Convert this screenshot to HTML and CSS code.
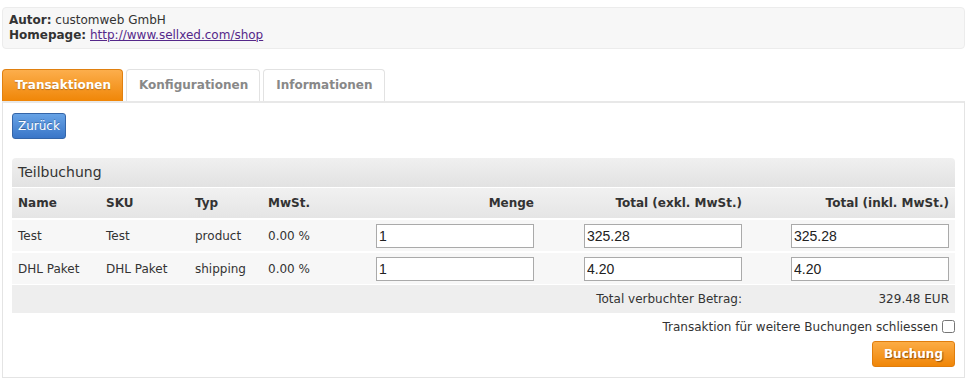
FILE: index.html
```html
<!DOCTYPE html>
<html lang="de">
<head>
    <meta charset="UTF-8">
    <title>Transaktion</title>
    <link rel="stylesheet" href="styles.css">
</head>
<body>
    <div class="info">
        <div><b>Autor:</b> customweb GmbH</div>
        <div><b>Homepage:</b> <a href="#">http://www.sellxed.com/shop</a></div>
    </div>

    <ul class="tabs">
        <li class="tab active">Transaktionen</li>
        <li class="tab">Konfigurationen</li>
        <li class="tab">Informationen</li>
    </ul>

    <div class="panel">
        <button class="btn btn-blue">Zurück</button>

        <div class="box">
            <div class="box-title">Teilbuchung</div>
            <table class="items">
                <colgroup>
                    <col style="width: 88px">
                    <col style="width: 89px">
                    <col style="width: 73px">
                    <col style="width: 108px">
                    <col style="width: 170px">
                    <col style="width: 208px">
                    <col>
                </colgroup>
                <thead>
                    <tr>
                        <th>Name</th>
                        <th>SKU</th>
                        <th>Typ</th>
                        <th>MwSt.</th>
                        <th class="right">Menge</th>
                        <th class="right">Total (exkl. MwSt.)</th>
                        <th class="right">Total (inkl. MwSt.)</th>
                    </tr>
                </thead>
                <tbody>
                    <tr>
                        <td>Test</td>
                        <td>Test</td>
                        <td>product</td>
                        <td>0.00 %</td>
                        <td class="right"><input type="text" value="1"></td>
                        <td class="right"><input type="text" value="325.28"></td>
                        <td class="right"><input type="text" value="325.28"></td>
                    </tr>
                    <tr>
                        <td>DHL Paket</td>
                        <td>DHL Paket</td>
                        <td>shipping</td>
                        <td>0.00 %</td>
                        <td class="right"><input type="text" value="1"></td>
                        <td class="right"><input type="text" value="4.20"></td>
                        <td class="right"><input type="text" value="4.20"></td>
                    </tr>
                    <tr class="total">
                        <td colspan="6" class="right">Total verbuchter Betrag:</td>
                        <td class="right">329.48 EUR</td>
                    </tr>
                </tbody>
            </table>
        </div>

        <label class="close-row">Transaktion für weitere Buchungen schliessen <input type="checkbox"></label>

        <div class="actions">
            <button class="btn btn-orange">Buchung</button>
        </div>
    </div>
</body>
</html>
```

FILE: styles.css
```css
body {
    margin: 0;
    padding: 7px 8px 0 2px;
    font-family: "DejaVu Sans", Verdana, sans-serif;
    font-size: 12px;
    color: #333;
    background: #fff;
}

.info {
    background: #f7f7f7;
    border: 1px solid #ececec;
    border-radius: 4px;
    padding: 5px 6px;
    line-height: 15px;
}

.info a {
    color: #55288a;
}

/* Tabs */
.tabs {
    list-style: none;
    margin: 20px 0 0;
    padding: 0;
    display: flex;
    gap: 3px;
}

.tab {
    height: 31px;
    line-height: 31px;
    padding: 0 11px 0 12px;
    border: 1px solid #e2e2e2;
    border-bottom: none;
    border-radius: 4px 4px 0 0;
    font-weight: bold;
    color: #888;
    background: #fff;
}

.tab.active {
    color: #fff;
    background: linear-gradient(#fcae4c, #f08607);
    border-color: #e08010;
    text-shadow: 0 1px 1px rgba(0,0,0,0.25);
}

.panel {
    border: 1px solid #e4e4e4;
    border-top: 2px solid #e8e8e8;
    padding: 10px 9px 10px 9px;
}

/* Buttons */
.btn {
    font-family: "DejaVu Sans", Verdana, sans-serif;
    font-size: 12px;
    height: 26px;
    border-radius: 3px;
    cursor: pointer;
    color: #fff;
}

.btn-blue {
    padding: 0 5px;
    background: linear-gradient(#67a3e6, #3a76c8);
    border: 1px solid #3465a8;
    text-shadow: 0 -1px 0 rgba(0,0,0,0.25);
}

.btn-orange {
    padding: 0 11px;
    font-weight: bold;
    background: linear-gradient(#fcac45, #f08608);
    border: 1px solid #e07d0c;
    text-shadow: 1px 1px 1px rgba(80,40,0,0.6);
}

/* Teilbuchung box */
.box {
    margin-top: 19px;
}

.box-title {
    height: 29px;
    line-height: 29px;
    padding: 0 6px;
    font-size: 14px;
    background: linear-gradient(#f0f0f0, #e2e2e2);
    border-radius: 4px 4px 0 0;
    border-bottom: 1px solid #fff;
}

.items {
    width: 100%;
    table-layout: fixed;
    border-collapse: collapse;
}

.items th {
    height: 30px;
    padding: 0 6px;
    text-align: left;
    font-weight: bold;
    background: linear-gradient(#f1f1f1, #e5e5e5);
}

.items td {
    height: 31px;
    padding: 0 6px;
    background: #f7f7f7;
    border-top: 2px solid #fff;
    white-space: nowrap;
}

.items .right {
    text-align: right;
}

.items .total td {
    height: 28px;
    background: #eeeeee;
    border-top-width: 1px;
}

.items input {
    width: 158px;
    height: 24px;
    box-sizing: border-box;
    margin: 0;
    padding: 0 2px;
    border: 1px solid #aaa;
    font-family: "Liberation Sans", Arial, sans-serif;
    font-size: 14px;
    color: #222;
    vertical-align: middle;
}

.close-row {
    display: flex;
    justify-content: flex-end;
    align-items: center;
    gap: 4px;
    height: 27px;
}

.close-row input {
    margin: 0;
    width: 13px;
    height: 13px;
}

.actions {
    display: flex;
    justify-content: flex-end;
    margin-top: 1px;
}
```
